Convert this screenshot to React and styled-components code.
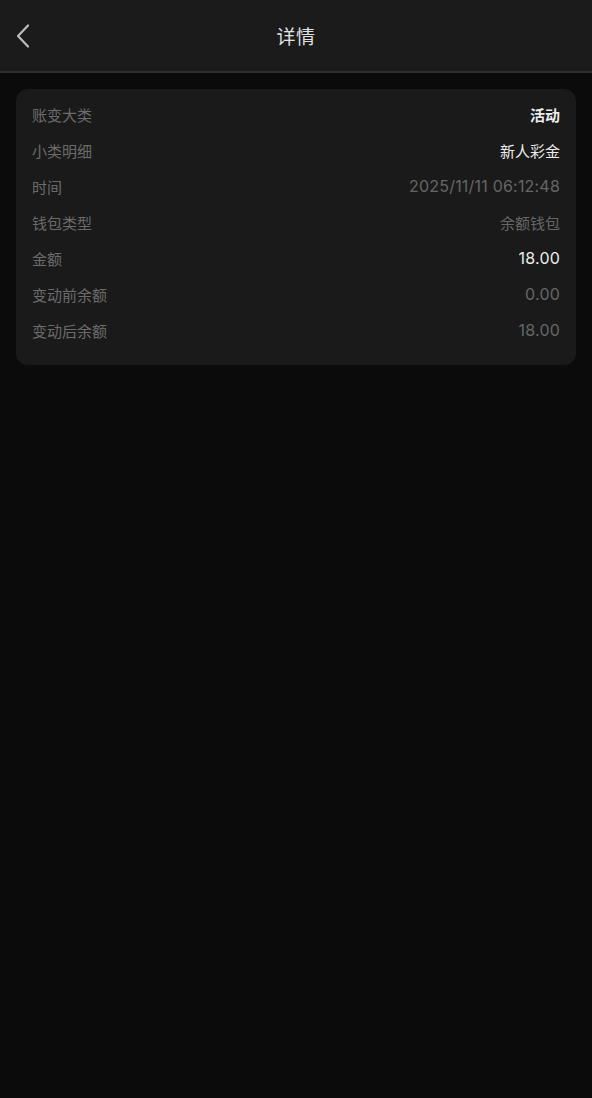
import React from "react";
import styled, { createGlobalStyle } from "styled-components";

const GlobalStyle = createGlobalStyle`
  html, body {
    margin: 0;
    padding: 0;
    background: #0b0b0b;
  }
  body {
    font-family: "Noto Sans CJK SC", "Inter", sans-serif;
  }
`;

const Page = styled.div`
  min-height: 1098px;
  background: #0b0b0b;
`;

const Header = styled.div`
  position: relative;
  display: flex;
  align-items: center;
  justify-content: center;
  height: 71px;
  background: #1b1b1b;
  border-bottom: 2px solid #2e2e2e;
`;

const BackButton = styled.button`
  position: absolute;
  left: 10px;
  top: 22px;
  width: 26px;
  height: 28px;
  padding: 0;
  display: flex;
  align-items: center;
  justify-content: center;
  background: none;
  border: none;
  cursor: pointer;
`;

const Title = styled.h1`
  margin: 0;
  font-size: 19px;
  font-weight: 400;
  color: #e2e2e2;
  letter-spacing: 0.5px;
`;

const Body = styled.div`
  padding: 16px;
`;

const Card = styled.div`
  background: #1a1a1a;
  border-radius: 12px;
  padding: 7px 16px 17px;
`;

const Row = styled.div`
  display: flex;
  align-items: center;
  justify-content: space-between;
  height: 36px;
  font-size: 15px;
`;

const Label = styled.span`
  color: #6b6b6b;
`;

const Value = styled.span`
  font-family: ${(p) =>
    p.$num ? `"Inter", sans-serif` : `"Noto Sans CJK SC", sans-serif`};
  font-size: ${(p) => (p.$num ? "16px" : "15px")};
  letter-spacing: ${(p) => (p.$num ? "0.2px" : "0")};
  color: ${(p) => (p.$light ? "#ececec" : "#666666")};
  font-weight: ${(p) => (p.$bold ? 700 : 400)};
`;

const rows = [
  { label: "账变大类", value: "活动", light: true, bold: true },
  { label: "小类明细", value: "新人彩金", light: true },
  { label: "时间", value: "2025/11/11 06:12:48", num: true },
  { label: "钱包类型", value: "余额钱包" },
  { label: "金额", value: "18.00", light: true, num: true },
  { label: "变动前余额", value: "0.00", num: true },
  { label: "变动后余额", value: "18.00", num: true },
];

const App = () => {
  return (
    <Page>
      <GlobalStyle />
      <Header>
        <BackButton aria-label="back">
          <svg width="18" height="26" viewBox="0 0 18 26" fill="none">
            <path
              d="M14 2.5L4 13L14 23.5"
              stroke="#bdbdbd"
              strokeWidth="2.2"
              strokeLinecap="round"
              strokeLinejoin="round"
            />
          </svg>
        </BackButton>
        <Title>详情</Title>
      </Header>
      <Body>
        <Card>
          {rows.map((r, idx) => (
            <Row key={idx}>
              <Label>{r.label}</Label>
              <Value $light={r.light} $bold={r.bold} $num={r.num}>
                {r.value}
              </Value>
            </Row>
          ))}
        </Card>
      </Body>
    </Page>
  );
};

export default App;
